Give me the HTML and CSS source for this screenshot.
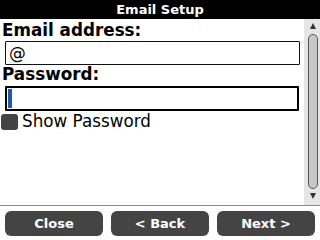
FILE: index.html
```html
<!DOCTYPE html>
<html>
<head>
<meta charset="utf-8">
<link rel="stylesheet" href="styles.css">
</head>
<body>
<div class="screen">
  <div class="titlebar">Email Setup</div>
  <div class="main">
    <div class="content">
      <div class="label">Email address:</div>
      <div class="field"><span class="value">@</span></div>
      <div class="label">Password:</div>
      <div class="field focused"><span class="cursor"></span></div>
      <div class="check-row"><span class="checkbox"></span><span class="check-label">Show Password</span></div>
    </div>
    <div class="scrollbar">
      <div class="arrow up"></div>
      <div class="thumb"></div>
      <div class="arrow down"></div>
    </div>
  </div>
  <div class="buttons">
    <div class="btn">Close</div>
    <div class="btn">&lt; Back</div>
    <div class="btn">Next &gt;</div>
  </div>
</div>
</body>
</html>
```
FILE: styles.css
```css
html, body {
  margin: 0;
  padding: 0;
  background: #fff;
}
.screen {
  width: 320px;
  height: 240px;
  display: flex;
  flex-direction: column;
  font-family: "DejaVu Sans", sans-serif;
  color: #000;
  overflow: hidden;
}
.titlebar {
  height: 19px;
  line-height: 19px;
  background: #000;
  color: #fff;
  font-weight: bold;
  font-size: 13px;
  text-align: center;
}
.main {
  height: 186px;
  display: flex;
  border-bottom: 1px solid #8a8a8a;
}
.content {
  flex: 1;
  padding: 2px 0 0 2px;
}
.label {
  font-weight: bold;
  font-size: 16.8px;
  line-height: 18px;
}
.field {
  margin: 2px 0 0 3px;
  width: 290px;
  height: 22px;
  border: 1px solid #111;
  border-radius: 1px;
  display: flex;
  align-items: center;
  padding-left: 3px;
  font-size: 16.8px;
  box-sizing: content-box;
}
.field.focused {
  margin-top: 3px;
  height: 21px;
  width: 289px;
  border: 2px solid #000;
  padding-left: 1px;
}
.cursor {
  width: 4px;
  height: 19px;
  background: #1f5aa6;
}
.check-row {
  display: flex;
  align-items: center;
  margin: 2px 0 0 -1px;
  height: 17px;
}
.checkbox {
  width: 17px;
  height: 16px;
  background: #444;
  border-radius: 3px;
  margin-right: 4px;
}
.check-label {
  font-size: 16.8px;
  line-height: 17px;
}
.scrollbar {
  width: 16px;
  background: #e6e6e6;
  display: flex;
  flex-direction: column;
  align-items: center;
  padding-top: 4px;
  box-sizing: border-box;
}
.arrow {
  width: 0;
  height: 0;
  border-left: 3px solid transparent;
  border-right: 3px solid transparent;
}
.arrow.up {
  border-bottom: 6px solid #333;
  margin-left: 1px;
}
.arrow.down {
  border-top: 6px solid #333;
  margin-left: 1px;
  margin-top: 4px;
}
.thumb {
  margin-top: 5px;
  width: 8px;
  height: 153px;
  background: #c8c8c8;
  border: 1px solid #555;
  border-radius: 5px;
  margin-left: 1px;
}
.buttons {
  display: flex;
  gap: 8px;
  padding: 5px 0 0 5px;
}
.btn {
  width: 98px;
  height: 25px;
  line-height: 25px;
  background: #444;
  color: #fff;
  font-weight: bold;
  font-size: 13px;
  text-align: center;
  border-radius: 6px;
}
```
